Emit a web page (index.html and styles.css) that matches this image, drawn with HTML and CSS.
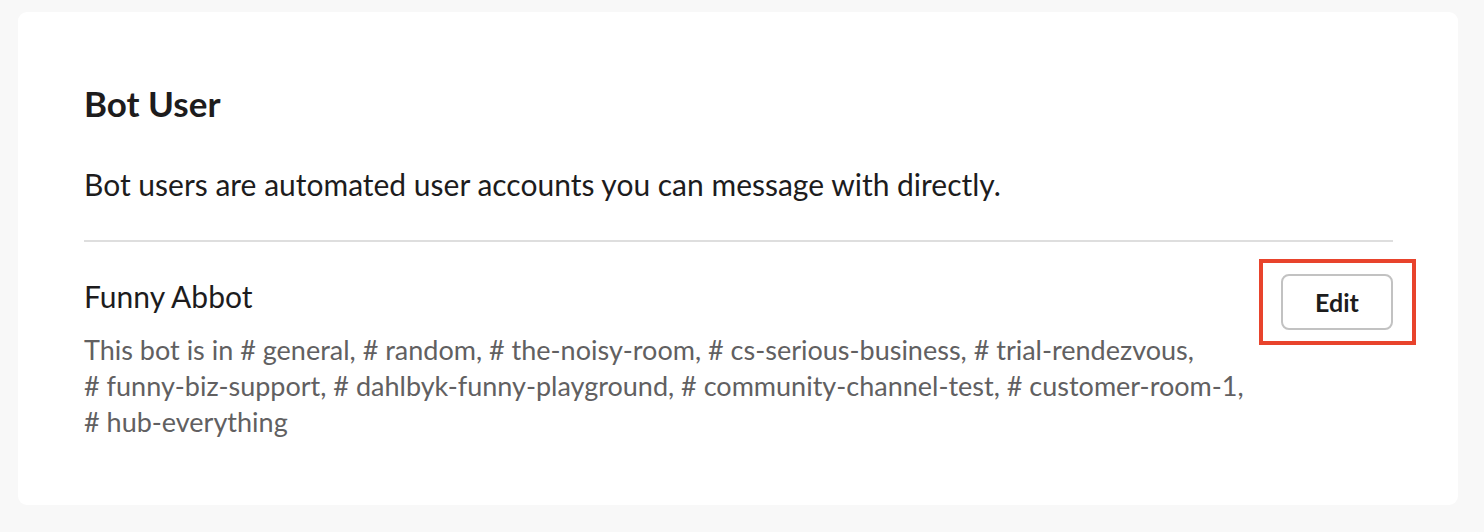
FILE: index.html
```html
<!DOCTYPE html>
<html>
<head>
<meta charset="utf-8">
<link rel="stylesheet" href="styles.css">
</head>
<body>
<div class="card">
  <h2 class="title">Bot User</h2>
  <p class="desc">Bot users are automated user accounts you can message with directly.</p>
  <div class="row">
    <div class="info">
      <div class="name">Funny Abbot</div>
      <div class="channels">This bot is in <span class="ch">#&nbsp;general,</span> <span class="ch">#&nbsp;random,</span> <span class="ch">#&nbsp;the-noisy-room,</span> <span class="ch">#&nbsp;cs-serious-business,</span> <span class="ch">#&nbsp;trial-rendezvous,</span> <span class="ch">#&nbsp;funny-biz-support,</span> <span class="ch">#&nbsp;dahlbyk-funny-playground,</span> <span class="ch">#&nbsp;community-channel-test,</span> <span class="ch">#&nbsp;customer-room-1,</span> <span class="ch">#&nbsp;hub-everything</span></div>
    </div>
    <div class="highlight">
      <button class="edit">Edit</button>
    </div>
  </div>
</div>
</body>
</html>
```

FILE: styles.css
```css
html, body {
  margin: 0;
  padding: 0;
  background: #f8f8f8;
}
body {
  font-family: Lato, "Noto Sans", sans-serif;
  color: #1d1c1d;
  padding: 12px 26px 27px 18px;
}
.card {
  background: #ffffff;
  border-radius: 9px;
  height: 493px;
  box-sizing: border-box;
  padding: 70px 65px 0 66px;
}
.title {
  margin: 0;
  font-size: 35px;
  font-weight: 700;
  line-height: 42px;
}
.desc {
  margin: 42px 0 0;
  font-size: 30px;
  line-height: 36px;
  padding-bottom: 38px;
  border-bottom: 2px solid #dedede;
}
.row {
  display: flex;
  align-items: flex-start;
  gap: 14px;
}
.info {
  flex: 1;
  padding-top: 36px;
}
.name {
  font-size: 30px;
  line-height: 36px;
}
.channels {
  margin-top: 18px;
  font-size: 27px;
  line-height: 36px;
  color: #616061;
}
.ch {
  white-space: nowrap;
}
.highlight {
  position: relative;
  margin-top: 32px;
  display: flex;
}
.highlight::after {
  content: "";
  position: absolute;
  top: -15px;
  bottom: -15px;
  left: -22px;
  right: -23px;
  border: 4px solid #e8432c;
  pointer-events: none;
}
.edit {
  width: 112px;
  height: 56px;
  box-sizing: border-box;
  border: 2px solid #c2c2c2;
  border-radius: 8px;
  background: #ffffff;
  font-family: Lato, "Noto Sans", sans-serif;
  font-weight: 700;
  font-size: 25px;
  color: #1d1c1d;
  padding: 0;
}
```
